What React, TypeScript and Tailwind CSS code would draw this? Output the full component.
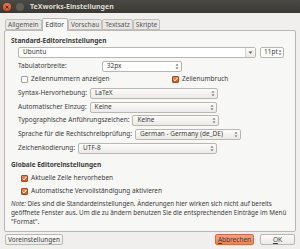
import React from 'react'

const font = { fontFamily: '"Noto Sans", "DejaVu Sans", sans-serif' }

function UpDown() {
  return (
    <svg width="4" height="7" viewBox="0 0 4 7" className="shrink-0">
      <path d="M0.5 2.6 L2 1 L3.5 2.6 Z" fill="#5a5855" />
      <path d="M0.5 4.4 L2 6 L3.5 4.4 Z" fill="#5a5855" />
    </svg>
  )
}

function Combo({ value, width }: { value: string; width: string }) {
  return (
    <div
      className={`${width} h-[11px] flex items-center justify-between pl-[4px] pr-[2px] rounded-[2px] border border-[#bab7b2] bg-gradient-to-b from-[#fbfbfa] to-[#eceae7] text-[#3c3c3c]`}
    >
      <span className="leading-none">{value}</span>
      <UpDown />
    </div>
  )
}

function Check({ checked, label }: { checked: boolean; label: string }) {
  return (
    <div className="flex items-center gap-[3px] h-[10px]">
      {checked ? (
        <div className="w-[7px] h-[7px] rounded-[1px] bg-gradient-to-b from-[#f08a5d] to-[#d9541c] border border-[#b9471a] flex items-center justify-center">
          <svg width="5" height="5" viewBox="0 0 5 5">
            <path d="M0.6 2.6 L2 3.9 L4.4 1" stroke="#fff" strokeWidth="1" fill="none" />
          </svg>
        </div>
      ) : (
        <div className="w-[7px] h-[7px] rounded-[1px] bg-white border border-[#a7a49f]" />
      )}
      <span className="leading-none text-[#3c3c3c]">{label}</span>
    </div>
  )
}

function Row({ label, children, mt }: { label: string; children: React.ReactNode; mt: string }) {
  return (
    <div className={`flex items-center gap-[3px] h-[11px] ${mt}`}>
      <span className="leading-none text-[#3c3c3c]">{label}</span>
      {children}
    </div>
  )
}

export default function App() {
  const tabs = ['Allgemein', 'Editor', 'Vorschau', 'Textsatz', 'Skripte']
  return (
    <div className="w-[300px] h-[249px] bg-[#f0efee] overflow-hidden text-[6.5px]" style={font}>
      <div className="h-[13px] flex items-center bg-gradient-to-b from-[#4a4944] to-[#3a3935] px-[3px]">
        <div className="w-[8px] h-[8px] rounded-full bg-gradient-to-b from-[#f2784a] to-[#d8481a] flex items-center justify-center">
          <svg width="4" height="4" viewBox="0 0 4 4">
            <path d="M0.6 0.6 L3.4 3.4 M3.4 0.6 L0.6 3.4" stroke="#3a2a20" strokeWidth="0.9" />
          </svg>
        </div>
        <div className="w-[8px] h-[8px] rounded-full bg-[#5f5e59] ml-[5px]" />
        <span className="ml-[6px] font-bold text-[#dfdbd2] text-[7px] leading-none">TeXworks-Einstellungen</span>
      </div>

      <div className="flex items-end h-[17px] pl-[5px]">
        {tabs.map(t =>
          t === 'Editor' ? (
            <div
              key={t}
              className="h-[13px] px-[3px] flex items-center border border-b-0 border-[#bab7b2] bg-[#f7f7f6] rounded-t-[2px] text-[#3c3c3c] relative top-[1px] z-10"
            >
              {t}
            </div>
          ) : (
            <div
              key={t}
              className="h-[11px] px-[2px] flex items-center border border-[#c3c0bb] bg-[#e9e8e6] rounded-t-[2px] text-[#555]"
            >
              {t}
            </div>
          )
        )}
      </div>

      <div className="mx-[4px] w-[292px] h-[202px] border border-[#bab7b2] bg-[#f7f7f6] rounded-[2px] pl-[6px] flex flex-col">
        <div className="mt-[5px] h-[10px] flex items-center font-bold text-[#3c3c3c] leading-none">
          Standard-Editoreinstellungen
        </div>
        <div className="pl-[7px] flex flex-col">
          <div className="flex items-center gap-[4px] h-[11px] mt-[1px]">
            <div className="w-[238px] h-[11px] flex items-center rounded-[2px] border border-[#bab7b2] bg-white">
              <span className="flex-1 pl-[4px] leading-none text-[#3c3c3c]">Ubuntu</span>
              <div className="w-[10px] h-full border-l border-[#d5d3cf] flex items-center justify-center bg-gradient-to-b from-[#fbfbfa] to-[#eceae7]">
                <svg width="5" height="3" viewBox="0 0 5 3">
                  <path d="M0.5 0.5 L2.5 2.7 L4.5 0.5 Z" fill="#5a5855" />
                </svg>
              </div>
            </div>
            <div className="w-[24px] h-[11px] flex items-center justify-between pl-[3px] pr-[1px] rounded-[2px] border border-[#bab7b2] bg-white text-[#3c3c3c]">
              <span className="leading-none">11pt</span>
              <UpDown />
            </div>
          </div>

          <Row label="Tabulatorbreite:" mt="mt-[3px]">
            <div className="ml-[32px] w-[80px] h-[11px] flex items-center justify-between pl-[4px] pr-[2px] rounded-[2px] border border-[#bab7b2] bg-white text-[#3c3c3c]">
              <span className="leading-none">32px</span>
              <UpDown />
            </div>
          </Row>

          <div className="flex items-center h-[10px] mt-[2px] pl-[3px]">
            <div className="w-[151px]">
              <Check checked={false} label="Zeilennummern anzeigen" />
            </div>
            <Check checked={true} label="Zeilenumbruch" />
          </div>

          <Row label="Syntax-Hervorhebung:" mt="mt-[4px]">
            <Combo value="LaTeX" width="w-[128px]" />
          </Row>
          <Row label="Automatischer Einzug:" mt="mt-[3px]">
            <Combo value="Keine" width="w-[127px]" />
          </Row>
          <Row label="Typographische Anführungszeichen:" mt="mt-[2px]">
            <Combo value="Keine" width="w-[87px]" />
          </Row>
          <Row label="Sprache für die Rechtschreibprüfung:" mt="mt-[3px]">
            <Combo value="German - Germany (de_DE)" width="w-[106px]" />
          </Row>
          <Row label="Zeichenkodierung:" mt="mt-[3px]">
            <Combo value="UTF-8" width="w-[139px]" />
          </Row>
        </div>

        <div className="mt-[6px] h-[10px] flex items-center font-bold text-[#3c3c3c] leading-none">
          Globale Editoreinstellungen
        </div>
        <div className="pl-[10px] flex flex-col">
          <div className="mt-[3px]">
            <Check checked={true} label="Aktuelle Zeile hervorheben" />
          </div>
          <div className="mt-[3px]">
            <Check checked={true} label="Automatische Vervollständigung aktivieren" />
          </div>
        </div>

        <div className="mt-[3px] text-[#3c3c3c] text-[6.3px] leading-[9px] flex flex-col whitespace-nowrap">
          <div>
            <i>Note:</i> <span>Dies sind die Standardeinstellungen. Änderungen hier wirken sich nicht auf bereits</span>
          </div>
          <div>geöffnete Fenster aus. Um die zu ändern benutzen Sie die entsprechenden Einträge im Menü</div>
          <div>"Format".</div>
        </div>
      </div>

      <div className="flex items-center h-[11px] mt-[2px] px-[5px]">
        <div className="w-[58px] h-[11px] flex items-center justify-center rounded-[2px] border border-[#bab7b2] bg-gradient-to-b from-[#fbfbfa] to-[#eceae7] text-[#3c3c3c]">
          Voreinstellungen
        </div>
        <div className="flex-1" />
        <div className="w-[39px] h-[11px] flex items-center justify-center rounded-[2px] border border-[#d86a3f] bg-gradient-to-b from-[#f6a27c] to-[#ee8254] text-[#3c3c3c]">
          <span><u>A</u>bbrechen</span>
        </div>
        <div className="ml-[6px] w-[35px] h-[11px] flex items-center justify-center rounded-[2px] border border-[#bab7b2] bg-gradient-to-b from-[#fbfbfa] to-[#eceae7] text-[#3c3c3c]">
          <span><u>O</u>K</span>
        </div>
      </div>
    </div>
  )
}
